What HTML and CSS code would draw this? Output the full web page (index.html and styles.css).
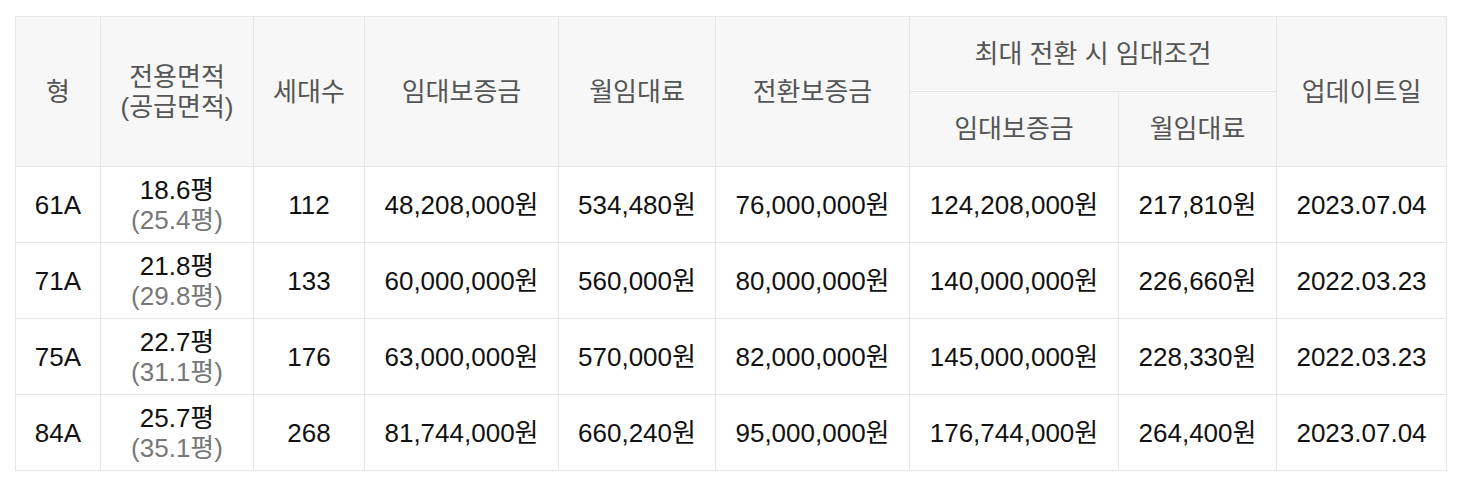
FILE: index.html
```html
<!DOCTYPE html>
<html lang="ko">
<head>
<meta charset="utf-8">
<link rel="stylesheet" href="styles.css">
</head>
<body>
<table class="rent">
  <colgroup>
    <col class="c1"><col class="c2"><col class="c3"><col class="c4"><col class="c5"><col class="c6"><col class="c7"><col class="c8"><col class="c9">
  </colgroup>
  <thead>
    <tr class="h1">
      <th rowspan="2">형</th>
      <th rowspan="2">전용면적<br>(공급면적)</th>
      <th rowspan="2">세대수</th>
      <th rowspan="2">임대보증금</th>
      <th rowspan="2">월임대료</th>
      <th rowspan="2">전환보증금</th>
      <th colspan="2">최대 전환 시 임대조건</th>
      <th rowspan="2">업데이트일</th>
    </tr>
    <tr class="h2">
      <th>임대보증금</th>
      <th>월임대료</th>
    </tr>
  </thead>
  <tbody>
    <tr>
      <td>61A</td>
      <td><span class="main">18.6평</span><span class="sub">(25.4평)</span></td>
      <td>112</td><td>48,208,000원</td><td>534,480원</td><td>76,000,000원</td><td>124,208,000원</td><td>217,810원</td><td>2023.07.04</td>
    </tr>
    <tr>
      <td>71A</td>
      <td><span class="main">21.8평</span><span class="sub">(29.8평)</span></td>
      <td>133</td><td>60,000,000원</td><td>560,000원</td><td>80,000,000원</td><td>140,000,000원</td><td>226,660원</td><td>2022.03.23</td>
    </tr>
    <tr>
      <td>75A</td>
      <td><span class="main">22.7평</span><span class="sub">(31.1평)</span></td>
      <td>176</td><td>63,000,000원</td><td>570,000원</td><td>82,000,000원</td><td>145,000,000원</td><td>228,330원</td><td>2022.03.23</td>
    </tr>
    <tr>
      <td>84A</td>
      <td><span class="main">25.7평</span><span class="sub">(35.1평)</span></td>
      <td>268</td><td>81,744,000원</td><td>660,240원</td><td>95,000,000원</td><td>176,744,000원</td><td>264,400원</td><td>2023.07.04</td>
    </tr>
  </tbody>
</table>
</body>
</html>
```
FILE: styles.css
```css
html, body {
  margin: 0;
  padding: 0;
  background: #ffffff;
}
body {
  padding: 16px 0 0 15px;
  font-family: "Liberation Sans", Arial, "Noto Sans CJK KR", sans-serif;
  font-size: 26px;
  color: #111111;
}
.rent {
  border-collapse: collapse;
  table-layout: fixed;
  width: 1431px;
  border-top: 1px solid #cfcfcf;
}
.c1 { width: 85px; }
.c2 { width: 153px; }
.c3 { width: 111px; }
.c4 { width: 194px; }
.c5 { width: 157px; }
.c6 { width: 194px; }
.c7 { width: 209px; }
.c8 { width: 158px; }
.c9 { width: 170px; }
.rent th, .rent td {
  border: 1px solid #e6e6e6;
  text-align: center;
  vertical-align: middle;
  padding: 0;
}
.rent th {
  background: #f7f7f7;
  color: #555555;
  font-weight: normal;
  line-height: 30px;
}
.rent tr.h1 th { height: 74px; }
.rent tr.h2 th { height: 74px; }
.rent td {
  height: 75px;
  line-height: 30px;
}
.main, .sub {
  display: block;
}
.sub {
  color: #777777;
}
```
